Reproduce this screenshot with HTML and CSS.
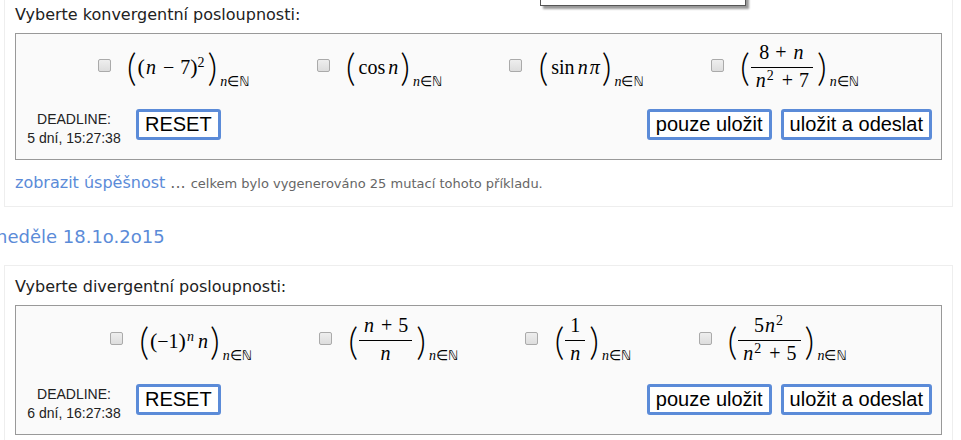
FILE: index.html
```html
<!DOCTYPE html>
<html lang="cs">
<head>
    <meta charset="UTF-8">
    <meta name="viewport" content="width=device-width, initial-scale=1.0">
    <title>Posloupnosti</title>
    <link rel="stylesheet" href="styles.css">
</head>
<body>
    <div class="popup"></div>

    <section class="card">
        <p class="task">Vyberte konvergentní posloupnosti:</p>
        <form class="box" action="javascript:void(0)">
            <div class="options">
                <label class="option">
                    <input type="checkbox" class="tick">
                    <span class="math">
                        <span class="paren">(</span>
                        <span class="expr"><span class="inner">(</span><i>n</i><span class="op">−</span>7<span class="inner">)</span><sup>2</sup></span>
                        <span class="paren">)</span>
                        <span class="index"><i>n</i>∈<span class="set">ℕ</span></span>
                    </span>
                </label>
                <label class="option">
                    <input type="checkbox" class="tick">
                    <span class="math">
                        <span class="paren">(</span>
                        <span class="expr"><span class="fn">cos</span><i>n</i></span>
                        <span class="paren">)</span>
                        <span class="index"><i>n</i>∈<span class="set">ℕ</span></span>
                    </span>
                </label>
                <label class="option">
                    <input type="checkbox" class="tick">
                    <span class="math">
                        <span class="paren">(</span>
                        <span class="expr"><span class="fn">sin</span><i>n</i><i>π</i></span>
                        <span class="paren">)</span>
                        <span class="index"><i>n</i>∈<span class="set">ℕ</span></span>
                    </span>
                </label>
                <label class="option">
                    <input type="checkbox" class="tick">
                    <span class="math">
                        <span class="paren">(</span>
                        <span class="frac">
                            <span class="num">8<span class="op">+</span><i>n</i></span>
                            <span class="den"><i>n</i><sup>2</sup><span class="op">+</span>7</span>
                        </span>
                        <span class="paren">)</span>
                        <span class="index"><i>n</i>∈<span class="set">ℕ</span></span>
                    </span>
                </label>
            </div>
            <div class="actions">
                <div class="deadline">DEADLINE:<br>5 dní, 15:27:38</div>
                <button class="btn" type="reset">RESET</button>
                <button class="btn save" type="button">pouze uložit</button>
                <button class="btn" type="submit">uložit a odeslat</button>
            </div>
        </form>
        <p class="stats"><a href="#">zobrazit úspěšnost</a> ... <small>celkem bylo vygenerováno 25 mutací tohoto příkladu.</small></p>
    </section>

    <h2 class="date">neděle 18.1o.2o15</h2>

    <section class="card">
        <p class="task">Vyberte divergentní posloupnosti:</p>
        <form class="box" action="javascript:void(0)">
            <div class="options tall">
                <label class="option">
                    <input type="checkbox" class="tick">
                    <span class="math">
                        <span class="paren">(</span>
                        <span class="expr"><span class="inner">(</span>−1<span class="inner">)</span><sup><i>n</i></sup><i>n</i></span>
                        <span class="paren">)</span>
                        <span class="index"><i>n</i>∈<span class="set">ℕ</span></span>
                    </span>
                </label>
                <label class="option">
                    <input type="checkbox" class="tick">
                    <span class="math">
                        <span class="paren">(</span>
                        <span class="frac">
                            <span class="num"><i>n</i><span class="op">+</span>5</span>
                            <span class="den"><i>n</i></span>
                        </span>
                        <span class="paren">)</span>
                        <span class="index"><i>n</i>∈<span class="set">ℕ</span></span>
                    </span>
                </label>
                <label class="option">
                    <input type="checkbox" class="tick">
                    <span class="math">
                        <span class="paren">(</span>
                        <span class="frac">
                            <span class="num">1</span>
                            <span class="den"><i>n</i></span>
                        </span>
                        <span class="paren">)</span>
                        <span class="index"><i>n</i>∈<span class="set">ℕ</span></span>
                    </span>
                </label>
                <label class="option">
                    <input type="checkbox" class="tick">
                    <span class="math">
                        <span class="paren">(</span>
                        <span class="frac">
                            <span class="num">5<i>n</i><sup>2</sup></span>
                            <span class="den"><i>n</i><sup>2</sup><span class="op">+</span>5</span>
                        </span>
                        <span class="paren">)</span>
                        <span class="index"><i>n</i>∈<span class="set">ℕ</span></span>
                    </span>
                </label>
            </div>
            <div class="actions">
                <div class="deadline">DEADLINE:<br>6 dní, 16:27:38</div>
                <button class="btn" type="reset">RESET</button>
                <button class="btn save" type="button">pouze uložit</button>
                <button class="btn" type="submit">uložit a odeslat</button>
            </div>
        </form>
    </section>
</body>
</html>
```

FILE: styles.css
```css
*{
    box-sizing: border-box;
    margin: 0;
}
body{
    margin-top: -7px;
    padding: 0 8px 0 4px;
    background-color: white;
    color: #222;
    font-family: "DejaVu Sans", sans-serif;
    font-size: 16px;
    overflow: hidden;
}
.popup{
    position: absolute;
    top: -20px;
    left: 540px;
    width: 206px;
    height: 26px;
    background-color: white;
    border: 1px solid #555;
    box-shadow: 3px 3px 2px #999;
}
.card{
    padding: 11px 10px 10px;
    border: 1px solid #eee;
}
.task{
    line-height: 20px;
    margin-bottom: 8px;
}
.box{
    background-color: #fafafa;
    border: 1px solid #999;
    padding: 0 9px 11px;
}
.options{
    display: flex;
    justify-content: center;
    gap: 67px;
    height: 66px;
    margin-bottom: 9px;
}
.tall{
    height: 69px;
}
.option{
    display: flex;
    align-items: center;
}
.tick{
    appearance: none;
    width: 13px;
    height: 13px;
    margin-right: 15px;
    margin-bottom: 4px;
    border: 1px solid #aaa;
    border-radius: 2px;
    background: linear-gradient(#eee, #ddd);
}
.tick:checked{
    background: #5b8bd8;
}

/* formulas */
.math{
    display: flex;
    align-items: center;
    height: 46px;
    color: black;
    font-family: "Liberation Serif", serif;
    font-size: 20px;
    line-height: 22px;
}
.math i{
    padding: 0 1px;
}
.math sup{
    font-size: 14px;
    line-height: 0;
    vertical-align: 7px;
    padding-right: 2px;
}
.paren{
    font-family: Lato, sans-serif;
    font-size: 38px;
    font-weight: 300;
    line-height: 44px;
    padding: 0 1px 2px;
}
.inner{
    font-size: 22px;
    line-height: 22px;
}
.op{
    padding: 0 6px;
}
.fn{
    padding: 0 2px;
}
.frac{
    margin-right: 3px;
    text-align: center;
}
.num,.den{
    display: block;
    padding: 0 4px;
}
.num{
    border-bottom: 1px solid black;
    padding-bottom: 4px;
}
.den{
    padding-top: 1px;
    padding-bottom: 3px;
}
.index{
    align-self: flex-end;
    padding-left: 2px;
    font-size: 14px;
    line-height: 16px;
}
.index i{
    padding: 0;
}
.set{
    font-family: "DejaVu Sans", sans-serif;
    font-size: 13px;
}

.actions{
    display: flex;
    gap: 9px;
}
.deadline{
    width: 98px;
    margin-right: 4px;
    padding-top: 1px;
    font-family: "Liberation Sans", sans-serif;
    font-size: 14px;
    line-height: 19px;
    text-align: center;
    white-space: nowrap;
}
.btn{
    height: 31px;
    padding: 0 6px;
    border: 3px solid #5b8bd8;
    border-radius: 3px;
    background-color: white;
    color: black;
    font-family: "Liberation Sans", sans-serif;
    font-size: 20px;
    line-height: 23px;
}
.btn:hover{
    background-color: #eef4ff;
}
.save{
    margin-left: auto;
}
.stats{
    margin-top: 11px;
    line-height: 24px;
    color: #666;
}
.stats a{
    color: #5b8bd8;
    text-decoration: none;
}
.stats small{
    font-size: 13px;
}
.date{
    margin: 16px 0 14px -8px;
    color: #5b8bd8;
    font-size: 18px;
    font-weight: normal;
    line-height: 28px;
}
```
